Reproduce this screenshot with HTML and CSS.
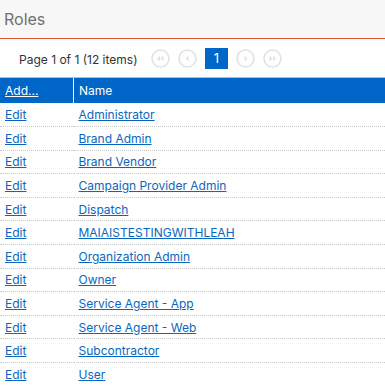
FILE: index.html
```html
<!DOCTYPE html>
<html>
<head>
<meta charset="utf-8">
<link rel="stylesheet" href="styles.css">
</head>
<body>
<div class="panel">
  <div class="title">Roles</div>
  <div class="pager">
    <span class="info">Page 1 of 1 (12 items)</span>
    <span class="nav">
      <span class="circ"><svg width="19" height="19" viewBox="0 0 19 19"><circle cx="9.5" cy="9.5" r="8.5" fill="none" stroke="#e2e2e2" stroke-width="1.6"/><path d="M9 6.5 L6 9.5 L9 12.5 Z M12.5 6.5 L9.5 9.5 L12.5 12.5 Z" fill="#e2e2e2"/></svg></span>
      <span class="circ"><svg width="19" height="19" viewBox="0 0 19 19"><circle cx="9.5" cy="9.5" r="8.5" fill="none" stroke="#e2e2e2" stroke-width="1.6"/><path d="M10.5 6.5 L7.5 9.5 L10.5 12.5 Z" fill="#e2e2e2"/></svg></span>
      <span class="cur">1</span>
      <span class="circ"><svg width="19" height="19" viewBox="0 0 19 19"><circle cx="9.5" cy="9.5" r="8.5" fill="none" stroke="#e2e2e2" stroke-width="1.6"/><path d="M8.5 6.5 L11.5 9.5 L8.5 12.5 Z" fill="#e2e2e2"/></svg></span>
      <span class="circ"><svg width="19" height="19" viewBox="0 0 19 19"><circle cx="9.5" cy="9.5" r="8.5" fill="none" stroke="#e2e2e2" stroke-width="1.6"/><path d="M6.5 6.5 L9.5 9.5 L6.5 12.5 Z M10 6.5 L13 9.5 L10 12.5 Z" fill="#e2e2e2"/></svg></span>
    </span>
  </div>
  <table class="grid">
    <thead>
      <tr><th class="c1"><a href="#">Add...</a></th><th>Name</th></tr>
    </thead>
    <tbody>
      <tr><td class="c1"><a href="#">Edit</a></td><td><a href="#">Administrator</a></td></tr>
      <tr><td class="c1"><a href="#">Edit</a></td><td><a href="#">Brand Admin</a></td></tr>
      <tr><td class="c1"><a href="#">Edit</a></td><td><a href="#">Brand Vendor</a></td></tr>
      <tr><td class="c1"><a href="#">Edit</a></td><td><a href="#">Campaign Provider Admin</a></td></tr>
      <tr><td class="c1"><a href="#">Edit</a></td><td><a href="#">Dispatch</a></td></tr>
      <tr><td class="c1"><a href="#">Edit</a></td><td><a href="#">MAIAISTESTINGWITHLEAH</a></td></tr>
      <tr><td class="c1"><a href="#">Edit</a></td><td><a href="#">Organization Admin</a></td></tr>
      <tr><td class="c1"><a href="#">Edit</a></td><td><a href="#">Owner</a></td></tr>
      <tr><td class="c1"><a href="#">Edit</a></td><td><a href="#">Service Agent - App</a></td></tr>
      <tr><td class="c1"><a href="#">Edit</a></td><td><a href="#">Service Agent - Web</a></td></tr>
      <tr><td class="c1"><a href="#">Edit</a></td><td><a href="#">Subcontractor</a></td></tr>
      <tr><td class="c1"><a href="#">Edit</a></td><td><a href="#">User</a></td></tr>
    </tbody>
  </table>
</div>
</body>
</html>
```
FILE: styles.css
```css
html, body { margin: 0; padding: 0; background: #fff; }
body { font-family: "Inter", "Liberation Sans", sans-serif; font-size: 12px; color: #333; }
.panel { width: 385px; }
.title {
  height: 39px; box-sizing: border-box;
  background: #f7f7f7;
  border-bottom: 1px solid #e4572e;
  padding: 8px 0 0 4px;
  font-size: 16px; color: #707070;
  line-height: 22px;
}
.pager {
  height: 39px; box-sizing: border-box;
  display: flex; align-items: center;
  padding: 0 0 0 19px;
  border-bottom: 1px solid #b9b9b9;
}
.info { font-size: 12px; color: #333; width: 132px; margin-top: 2px; }
.nav { display: flex; align-items: center; gap: 8px; margin-top: 0px; }
.circ { display: flex; width: 19px; height: 19px; }
.cur {
  width: 23px; height: 21px; background: #0066c8; color: #fff;
  display: flex; align-items: center; justify-content: center; font-size: 13px;
}
.grid { border-collapse: collapse; width: 385px; table-layout: fixed; }
.grid th {
  background: #0066c8; color: #fff; font-weight: normal; text-align: left;
  height: 25px; padding: 0 0 0 5px; font-size: 12px;
}
.grid th.c1 { width: 68px; border-right: 1px solid #fff; }
.grid th a { color: #fff; }
.grid td {
  height: 23.6px; padding: 0 0 0 5px; box-sizing: border-box;
  border-bottom: 1px dotted #c8c8c8;
}
.grid td.c1 { }
.grid td a { color: #0a67c0; }
.grid tr:last-child td { border-bottom: none; }
```
